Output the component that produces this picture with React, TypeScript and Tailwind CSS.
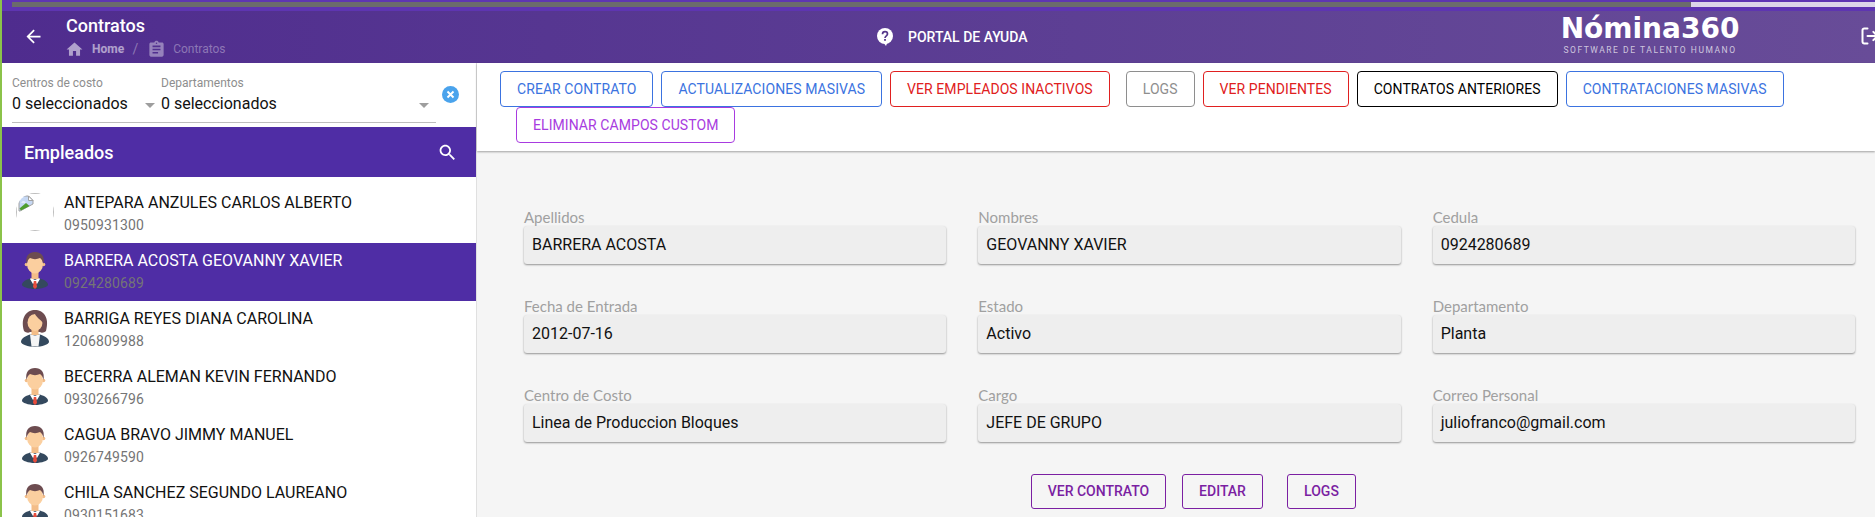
import { LogOut } from 'lucide-react';

const roboto = "font-['Roboto',sans-serif]";

const empleados = [
  { name: 'ANTEPARA ANZULES CARLOS ALBERTO', id: '0950931300', kind: 'broken' },
  { name: 'BARRERA ACOSTA GEOVANNY XAVIER', id: '0924280689', kind: 'man', selected: true },
  { name: 'BARRIGA REYES DIANA CAROLINA', id: '1206809988', kind: 'woman' },
  { name: 'BECERRA ALEMAN KEVIN FERNANDO', id: '0930266796', kind: 'man' },
  { name: 'CAGUA BRAVO JIMMY MANUEL', id: '0926749590', kind: 'man' },
  { name: 'CHILA SANCHEZ SEGUNDO LAUREANO', id: '0930151683', kind: 'man' },
];

const campos = [
  ['Apellidos', 'BARRERA ACOSTA'],
  ['Nombres', 'GEOVANNY XAVIER'],
  ['Cedula', '0924280689'],
  ['Fecha de Entrada', '2012-07-16'],
  ['Estado', 'Activo'],
  ['Departamento', 'Planta'],
  ['Centro de Costo', 'Linea de Produccion Bloques'],
  ['Cargo', 'JEFE DE GRUPO'],
  ['Correo Personal', 'juliofranco@gmail.com'],
];

const ManAvatar = () => (
  <svg viewBox="0 0 40 40" className="h-10 w-10">
    <path d="M6 33c0-4 5-5.500 10-7h6c5 1.500 10 3 10 7 0 1.500-6 4-13 4S6 34.500 6 33z" fill="#34495e" />
    <path d="M15 26l4 2 4-2 1 1-3 5-2-1.500-2 1.500-3-5z" fill="#fff" />
    <path d="M17.800 29h2.400l.8 6-2 2-2-2z" fill="#e74c3c" />
    <rect x="15.500" y="18" width="7" height="9" fill="#f3bd88" />
    <circle cx="10.500" cy="12.500" r="1.800" fill="#f3bd88" />
    <circle cx="27.500" cy="12.500" r="1.800" fill="#f3bd88" />
    <ellipse cx="19" cy="12" rx="8" ry="9.500" fill="#fbcf9f" />
    <path d="M10.500 12C9 4 13 0 19 0s10 4 8.500 12c-.5-3-2-5-3.500-6-3 1.500-7 1.500-10 0-1.500 1-3 3-3.500 6z" fill="#6d4c50" />
  </svg>
);

const WomanAvatar = () => (
  <svg viewBox="0 0 40 40" className="h-10 w-10">
    <path d="M8 21C4 7 11 0 19 0s15 7 11 21c-2 2-5 2-6 1H14c-1 1-4 1-6-1z" fill="#6d4c50" />
    <path d="M5 32c0-4 5-6 9-7.500h10c4 1.500 9 3.500 9 7.500 0 2-7 5-14 5S5 34 5 32z" fill="#34495e" />
    <path d="M14 24.500l5 1 5-1-1.500 12h-7z" fill="#f5f5f5" />
    <rect x="15.500" y="17" width="7" height="8" fill="#f3bd88" />
    <ellipse cx="19" cy="12.500" rx="7.500" ry="8.500" fill="#fbcf9f" />
    <path d="M11 13c-.5-6 3-9 8-9 1 3 5 5 8 9 .5-7-3-11-8-11s-8.500 4-8 11z" fill="#6d4c50" />
  </svg>
);

// imagen rota: el borde cuadrado queda recortado por el circulo
const BrokenAvatar = () => (
  <div className="relative mb-[4px] mr-[2px] h-[38px] w-[38px] overflow-hidden rounded-full bg-white">
    <div className="h-full w-full border border-[#bdbdbd]" />
    <svg viewBox="0 0 16 17" className="absolute left-[2px] top-[2px] h-[17px] w-4">
      <path d="M1 1h9.500L15 5.500V9L2 16H1z" fill="#c6d8f4" stroke="#a0a0a0" strokeWidth="1" />
      <path d="M10.500 1v4.500H15z" fill="#fff" stroke="#a0a0a0" strokeWidth="1" />
      <path d="M3 7.500c1-1.500 4-1.500 5 0z" fill="#fff" />
      <path d="M1.500 13.500L8 8l3.500 3L3 15.500z" fill="#4f9e2e" />
    </svg>
  </div>
);

const Boton = ({ label, className }: { label: string; className: string }) => (
  <button className={`mx-1 h-9 rounded-[4px] border px-4 text-[14px] uppercase tracking-[0.07px] ${roboto} ${className}`}>
    {label}
  </button>
);

export default function App() {
  return (
    <div className={`flex h-[517px] w-[1875px] flex-col overflow-hidden border-l-2 border-[#8bc34a] bg-[#f5f5f5] ${roboto}`}>
      <div className="h-[11px] shrink-0 bg-[#5e35b1] pt-[2px]">
        <div className="ml-[10px] flex h-[5px]">
          <div className="w-[1679px] bg-[#6b6b6b]" />
          <div className="flex-1 bg-[#dcd6e8]" />
        </div>
      </div>

      <header className="flex h-[52px] shrink-0 items-center bg-gradient-to-r from-[#4f2c8e] to-[#684c98] text-white">
        <svg viewBox="0 0 24 24" className="ml-[20.500px] -mt-[2px] h-[21px] w-[21px] shrink-0 fill-current">
          <path d="M20 11H7.830l5.590-5.590L12 4l-8 8 8 8 1.410-1.410L7.830 13H20v-2z" />
        </svg>
        <div className="ml-[22.500px] w-[811px] shrink-0 self-start pt-[5px]">
          <div className="text-[18px] font-medium leading-[20px]">Contratos</div>
          <div className="-ml-[1px] mt-[4px] flex h-[18px] items-center text-[12px]">
            <svg viewBox="0 0 24 24" className="h-[19px] w-[19px] fill-current text-white/55"><path d="M10 20v-6h4v6h5v-8h3L12 3 2 12h3v8z" /></svg>
            <span className="ml-2 font-bold text-white/55">Home</span>
            <span className="w-[22.500px] text-center text-[14px] text-white/35">/</span>
            <svg viewBox="0 0 24 24" className="h-[19px] w-[19px] fill-current text-white/40"><path d="M19 3h-4.200C14.400 1.800 13.300 1 12 1s-2.400.8-2.800 2H5c-1.100 0-2 .9-2 2v14c0 1.100.9 2 2 2h14c1.100 0 2-.9 2-2V5c0-1.100-.9-2-2-2zm-7 0c.6 0 1 .4 1 1s-.4 1-1 1-1-.4-1-1 .4-1 1-1zm2 14H7v-2h7v2zm3-4H7v-2h10v2zm0-4H7V7h10v2z" /></svg>
            <span className="ml-[7.500px] text-white/35">Contratos</span>
          </div>
        </div>
        <div className="flex w-[683px] shrink-0 items-center">
          <svg viewBox="0 0 16 18" className="h-[18px] w-4 shrink-0">
            <circle cx="8" cy="8" r="8" fill="#fff" />
            <path d="M6 14l3 4 2-5z" fill="#fff" />
            <path d="M5.500 6.200C5.500 4.700 6.600 3.700 8 3.700s2.500 1 2.500 2.300c0 1.800-2.500 1.900-2.500 4" fill="none" stroke="#55378a" strokeWidth="1.700" />
            <rect x="7.100" y="11" width="1.800" height="1.800" fill="#55378a" />
          </svg>
          <span className="ml-[15px] text-[14px] font-medium">PORTAL DE AYUDA</span>
        </div>
        <div className="flex w-[180px] shrink-0 flex-col items-center self-start pt-[3px]">
          <span className="font-['DejaVu_Sans',sans-serif] text-[28px] font-bold leading-[30px]">Nómina360</span>
          <span className="mt-[1px] whitespace-nowrap text-[8.500px] leading-[10px] tracking-[0.18em] text-white/70">SOFTWARE DE TALENTO HUMANO</span>
        </div>
        <LogOut className="ml-[119.500px] -mt-[3px] h-5 w-5 shrink-0" strokeWidth={2.4} />
      </header>

      <div className="flex min-h-0 flex-1">
        <aside className="w-[475px] shrink-0 border-r border-[#e0e0e0] bg-white">
          <div className="flex h-[64px] items-start pl-[10px]">
            <div className="mt-[13px] flex h-[47px] w-[424px] border-b border-[#bdbdbd]">
              <div className="w-[149px]">
                <div className="text-[12px] leading-[14px] text-[#8e8e8e]">Centros de costo</div>
                <div className="mt-[4px] flex items-center justify-between pr-[6px] text-[16px] leading-[20px] text-[#111]">
                  0 seleccionados
                  <span className="mt-[2px] border-x-[5px] border-t-[5px] border-x-transparent border-t-[#9e9e9e]" />
                </div>
              </div>
              <div className="flex-1">
                <div className="text-[12px] leading-[14px] text-[#8e8e8e]">Departamentos</div>
                <div className="mt-[4px] flex items-center justify-between pr-[7px] text-[16px] leading-[20px] text-[#111]">
                  0 seleccionados
                  <span className="mt-[2px] border-x-[5px] border-t-[5px] border-x-transparent border-t-[#9e9e9e]" />
                </div>
              </div>
            </div>
            <svg viewBox="0 0 18 18" className="ml-[6px] mt-[23px] h-[17px] w-[17px]">
              <circle cx="9" cy="9" r="9" fill="#4aa3ec" />
              <path d="M5.800 5.800l6.400 6.400M12.200 5.800l-6.400 6.400" stroke="#fff" strokeWidth="2" />
            </svg>
          </div>

          <div className="flex h-[50px] items-center justify-between bg-[#4f2da5] pl-[22px] pr-[18px] text-white">
            <span className="text-[18px] font-medium">Empleados</span>
            <svg viewBox="0 0 24 24" className="h-[21px] w-[21px] fill-current">
              <path d="M15.500 14h-.79l-.28-.27C15.410 12.590 16 11.110 16 9.500 16 5.910 13.090 3 9.500 3S3 5.910 3 9.500 5.910 16 9.500 16c1.610 0 3.090-.59 4.230-1.570l.27.28v.79l5 4.990L20.490 19l-4.990-5zm-6 0C7.010 14 5 11.990 5 9.500S7.010 5 9.500 5 14 7.010 14 9.500 11.990 14 9.500 14z" />
            </svg>
          </div>

          <ul className="pt-2">
            {empleados.map((e) => (
              <li key={e.id} className={`flex h-[58px] items-center pl-[14px] ${e.selected ? 'bg-[#4f2da5]' : ''}`}>
                {e.kind === 'broken' ? <BrokenAvatar /> : e.kind === 'woman' ? <WomanAvatar /> : <ManAvatar />}
                <div className="ml-2">
                  <div className={`text-[16px] leading-[22px] ${e.selected ? 'text-white' : 'text-[#111]'}`}>{e.name}</div>
                  <div className="text-[14px] leading-[22px] tracking-[0.01em] text-[#757575]">{e.id}</div>
                </div>
              </li>
            ))}
          </ul>
        </aside>

        <main className="min-w-0 flex-1">
          <div className="h-[88px] bg-white pl-[19px] pt-2 shadow-[0_1px_2px_rgba(0,0,0,0.35)]">
            <div className="flex w-[1320px] flex-wrap">
              <Boton label="Crear contrato" className="border-[#3b73e0] text-[#3b73e0]" />
              <Boton label="Actualizaciones masivas" className="border-[#3b73e0] text-[#3b73e0]" />
              <Boton label="Ver empleados inactivos" className="border-[#e02020] text-[#e02020]" />
              <Boton label="Logs" className="ml-3 border-[#8e8e8e] text-[#8e8e8e]" />
              <Boton label="Ver pendientes" className="border-[#e02020] text-[#e02020]" />
              <Boton label="Contratos anteriores" className="border-black text-black" />
              <Boton label="Contrataciones masivas" className="border-[#3b73e0] text-[#3b73e0]" />
              <Boton label="Eliminar campos custom" className="ml-5 border-[#a83be0] text-[#a83be0]" />
            </div>
          </div>

          <div className="ml-[47px] mt-[75px] grid w-[1331px] grid-cols-3 gap-x-8 gap-y-[51px]">
            {campos.map(([label, value]) => (
              <div key={label} className="relative h-[38px] rounded-[3px] bg-[#eeeeee] shadow-[0_1px_2px_rgba(0,0,0,0.4)]">
                <span className="absolute -top-[18px] left-0 font-['Lato',sans-serif] text-[15px] leading-[18px] text-[#a0a0a0]">{label}</span>
                <div className="px-2 text-[16px] leading-[38px] text-[#111]">{value}</div>
              </div>
            ))}
          </div>

          <div className="ml-[554px] mt-8 flex">
            <button className="h-[35px] w-[135px] rounded-[3px] border border-[#7b1fa2] text-[14px] font-medium text-[#7b1fa2]">VER CONTRATO</button>
            <button className="ml-4 h-[35px] w-[81px] rounded-[3px] border border-[#7b1fa2] text-[14px] font-medium text-[#7b1fa2]">EDITAR</button>
            <button className="ml-6 h-[35px] w-[69px] rounded-[3px] border border-[#7b1fa2] text-[14px] font-medium text-[#7b1fa2]">LOGS</button>
          </div>
        </main>
      </div>
    </div>
  );
}
